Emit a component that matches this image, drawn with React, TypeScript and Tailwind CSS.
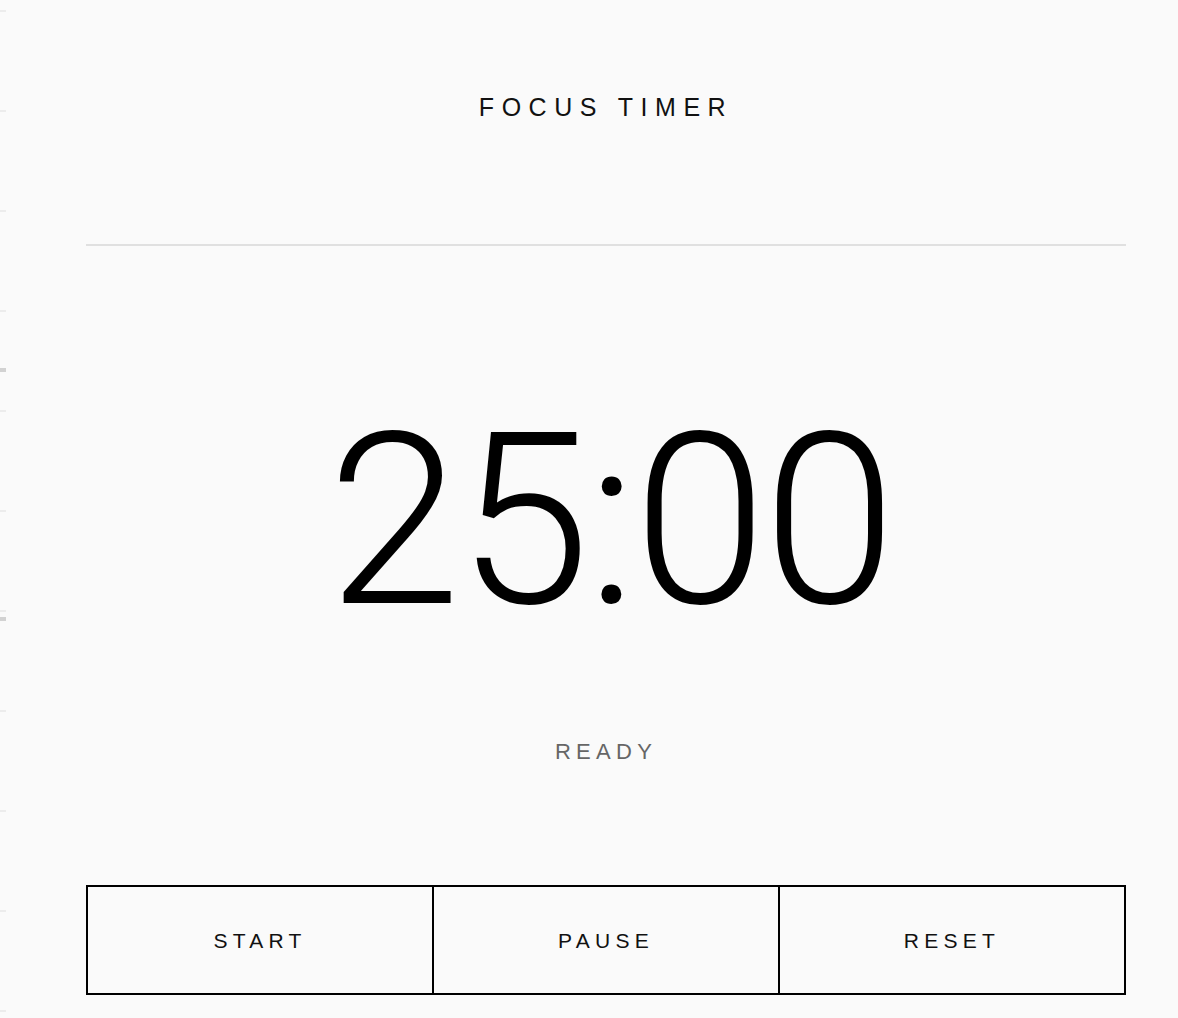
const TICKS = Array.from({ length: 11 }, (_, i) => i);

function Ruler() {
  return (
    <div className="relative w-[34px] shrink-0 flex flex-col gap-[98px] pt-[10px]">
      {TICKS.map((i) => (
        <div key={i} className="h-[2px] w-[6px] bg-[#ececec]" />
      ))}
      {/* session markers */}
      <div className="absolute left-0 top-[368px] h-[4px] w-[6px] bg-[#d2d2d2]" />
      <div className="absolute left-0 top-[617px] h-[4px] w-[6px] bg-[#d2d2d2]" />
    </div>
  );
}

function ControlButton({ label }: { label: string }) {
  return (
    <button
      type="button"
      className="flex-1 flex items-center justify-center bg-transparent text-[21px] leading-none tracking-[0.25em] text-[#111] font-['Liberation_Sans',Arial,sans-serif] cursor-pointer"
    >
      {label}
    </button>
  );
}

export default function App() {
  return (
    <div className="min-h-screen bg-[#fafafa] flex text-[#111]">
      <Ruler />
      <main className="flex-1 px-[52px] flex flex-col">
        <header className="h-[244px] pt-[95px] text-center">
          <h1 className="text-[25px] leading-none tracking-[0.3em] font-normal font-['Liberation_Sans',Arial,sans-serif]">
            FOCUS TIMER
          </h1>
        </header>
        <div className="h-[2px] bg-[#e0e0e0]" />

        <div className="mt-[155px] pl-[8px] text-center font-['Roboto',sans-serif] font-light text-[240px] leading-none tracking-[-0.015em] text-black">
          25:00
        </div>

        <div className="mt-[100px] text-center text-[22px] leading-none tracking-[0.24em] text-[#666] font-['Liberation_Sans',Arial,sans-serif]">
          READY
        </div>

        <div className="mt-[122px] h-[110px] flex border-2 border-black divide-x-2 divide-black">
          <ControlButton label="START" />
          <ControlButton label="PAUSE" />
          <ControlButton label="RESET" />
        </div>
      </main>
    </div>
  );
}
